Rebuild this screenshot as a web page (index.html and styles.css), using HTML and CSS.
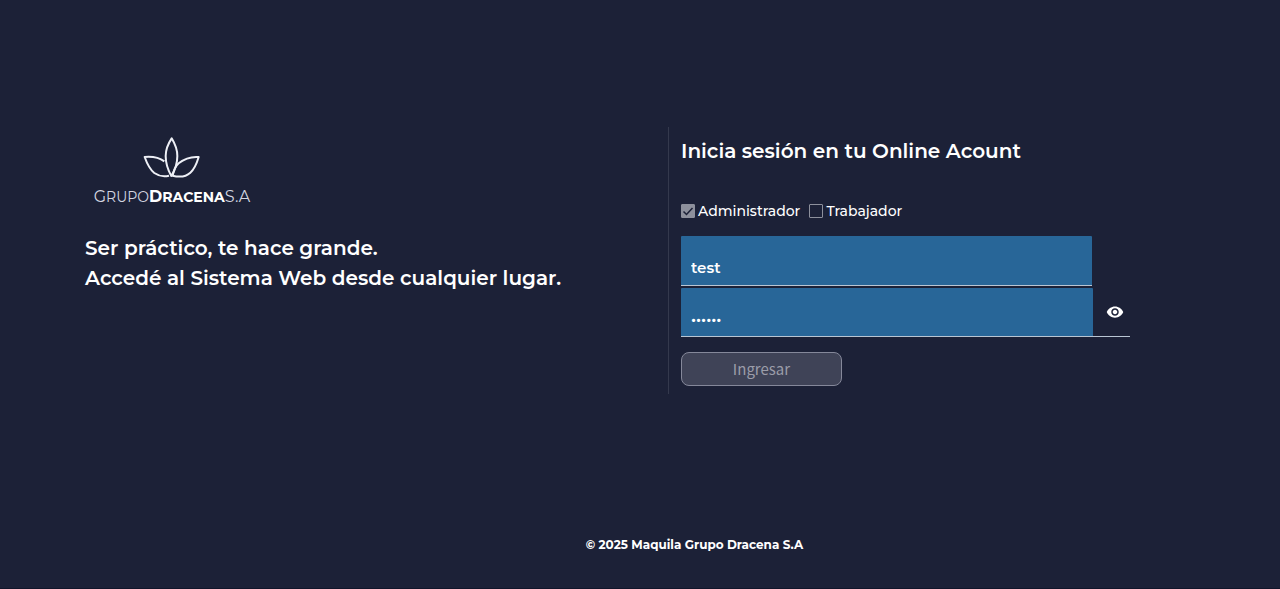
FILE: index.html
```html
<!DOCTYPE html>
<html lang="es">
<head>
<meta charset="utf-8">
<meta name="viewport" content="width=device-width, initial-scale=1">
<title>Grupo Dracena S.A</title>
<link rel="stylesheet" href="styles.css">
</head>
<body>
<main class="login">
  <section class="intro">
    <div class="brand">
      <svg class="brand-mark" viewBox="0 0 192 150" aria-hidden="true">
        <path d="M95 19C83 37 77 53 77 72C77 96 85 116 94 132C104 116 112 96 112 72C112 53 106 37 95 19Z"/>
        <path d="M73 88C58 77 38 73 14 75C20 92 27 110 43 123C56 132 72 135 87 131"/>
        <path d="M176 75C152 73 132 81 116 94C106 103 101 116 98 131C118 136 139 133 151 122C166 109 171 92 176 75Z"/>
      </svg>
      <div class="brand-name"><span class="brand-cap">G</span>RUPO<strong><span class="brand-cap">D</span>RACENA</strong><span class="brand-cap">S.A</span></div>
    </div>
    <p class="slogan">Ser práctico, te hace grande.<br>Accedé al Sistema Web desde cualquier lugar.</p>
  </section>
  <section class="access">
    <h1 class="title">Inicia sesión en tu Online Acount</h1>
    <form class="form">
      <div class="roles">
        <label class="role"><input class="check" type="checkbox" checked><svg class="tick" viewBox="0 0 14 14" aria-hidden="true"><path d="M2.5 7.5L5.5 10.5L11.5 4"/></svg>Administrador</label>
        <label class="role"><input class="check" type="checkbox">Trabajador</label>
      </div>
      <div class="field field-user">
        <input class="input" type="text" value="test" aria-label="Usuario">
      </div>
      <div class="field field-pass">
        <input class="input input-pass" type="password" value="secret" aria-label="Contraseña">
        <button class="reveal" type="button" aria-label="Mostrar contraseña">
          <svg class="eye" viewBox="0 0 24 24" aria-hidden="true"><path d="M12 4.5C7 4.5 2.73 7.61 1 12c1.73 4.39 6 7.5 11 7.5s9.27-3.11 11-7.5c-1.73-4.39-6-7.5-11-7.5zM12 17c-2.76 0-5-2.24-5-5s2.24-5 5-5 5 2.24 5 5-2.24 5-5 5zm0-8c-1.66 0-3 1.34-3 3s1.34 3 3 3 3-1.34 3-3-1.34-3-3-3z"/></svg>
        </button>
      </div>
      <button class="submit" type="button">Ingresar</button>
    </form>
  </section>
</main>
<footer class="footer">© 2025 Maquila Grupo Dracena S.A</footer>
</body>
</html>
```
FILE: styles.css
```css
* { box-sizing: border-box; }

body {
  margin: 0;
  min-height: 100vh;
  display: flex;
  flex-direction: column;
  background: #1c2137;
  border-bottom: 1px solid #11152a;
  color: #fff;
  font-family: Montserrat, Inter, sans-serif;
}

.login {
  display: grid;
  grid-template-columns: 583fr 462fr;
  padding: 127px 150px 0 85px;
}

.brand {
  width: 174px;
  padding-top: 5px;
  display: flex;
  flex-direction: column;
  align-items: center;
}

.brand-mark {
  width: 64px;
  height: 50px;
  fill: none;
  stroke: #eef0f6;
  stroke-width: 6;
  stroke-linejoin: round;
}

.brand-name {
  margin-top: 5px;
  font-size: 14px;
  font-weight: 400;
  line-height: 20px;
  color: #d3d6e0;
  white-space: nowrap;
}

.brand-name strong { font-weight: 700; color: #fff; }
.brand-cap { font-size: 16px; }

.slogan {
  margin: 26px 0 0;
  font-size: 20px;
  font-weight: 600;
  line-height: 30px;
}

.access {
  border-left: 1px solid #34394d;
  padding: 9px 0 8px 12px;
}

.title {
  margin: 0;
  font-size: 20px;
  font-weight: 600;
  line-height: 30px;
}

.roles {
  display: flex;
  gap: 9px;
  margin-top: 35px;
}

.role {
  position: relative;
  display: flex;
  align-items: center;
  gap: 3px;
  font-size: 14px;
  font-weight: 500;
  line-height: 20px;
}

.check {
  appearance: none;
  width: 14px;
  height: 14px;
  margin: 0;
  border: 1px solid #8d909c;
  border-radius: 1px;
}

.check:checked { background: #8d909c; }

.tick {
  position: absolute;
  left: 0;
  width: 14px;
  height: 14px;
  fill: none;
  stroke: #1c2137;
  stroke-width: 1.5;
  pointer-events: none;
}

.field { display: flex; border-bottom: 1px solid #b9c5d3; }
.field-user { margin: 15px 38px 2px 0; }

.input {
  flex: 1;
  min-width: 0;
  height: 49px;
  padding: 14px 10px 0;
  border: 0;
  border-radius: 1px 1px 0 0;
  background: #286698;
  color: #fff;
  font: 600 15px/20px Montserrat, Inter, sans-serif;
}

.input-pass { height: 48px; }

.reveal {
  width: 37px;
  padding: 0 0 0 7px;
  border: 0;
  background: none;
  color: #fff;
  display: flex;
  align-items: center;
  justify-content: center;
}

.eye { width: 18px; height: 18px; fill: currentColor; }

.submit {
  display: block;
  width: 161px;
  height: 34px;
  margin-top: 15px;
  padding: 0;
  border: 1px solid #85889a;
  border-radius: 8px;
  background: #3f4357;
  color: #9b9da9;
  font: 400 15px/24px "Noto Sans CJK SC", sans-serif;
}

.footer {
  margin: auto 0 33px;
  padding-left: 109px;
  text-align: center;
  font-size: 12px;
  font-weight: 700;
  line-height: 20px;
}
```
